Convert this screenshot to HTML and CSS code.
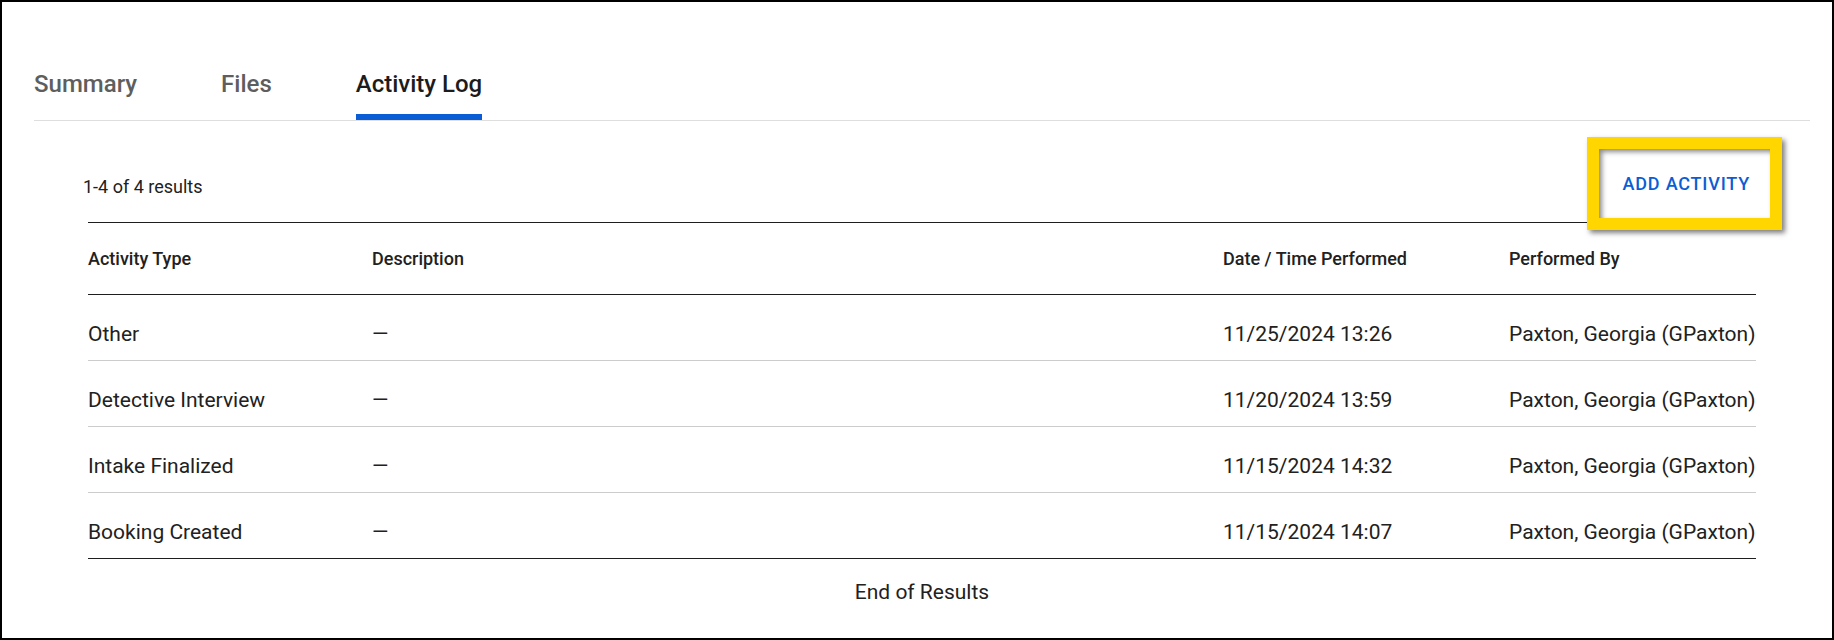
FILE: index.html
```html
<!DOCTYPE html>
<html lang="en">
<head>
<meta charset="utf-8">
<title>Activity Log</title>
<link rel="stylesheet" href="styles.css">
</head>
<body>
<div class="frame">
  <nav class="tabs">
    <div class="tab">Summary</div>
    <div class="tab">Files</div>
    <div class="tab active">Activity Log</div>
  </nav>
  <div class="toolbar">
    <span class="count">1-4 of 4 results</span>
    <button class="add-btn" type="button">Add Activity</button>
  </div>
  <div class="table">
    <div class="row head">
      <div>Activity Type</div>
      <div>Description</div>
      <div>Date / Time Performed</div>
      <div>Performed By</div>
    </div>
    <div class="row">
      <div>Other</div>
      <div>—</div>
      <div>11/25/2024 13:26</div>
      <div>Paxton, Georgia (GPaxton)</div>
    </div>
    <div class="row">
      <div>Detective Interview</div>
      <div>—</div>
      <div>11/20/2024 13:59</div>
      <div>Paxton, Georgia (GPaxton)</div>
    </div>
    <div class="row">
      <div>Intake Finalized</div>
      <div>—</div>
      <div>11/15/2024 14:32</div>
      <div>Paxton, Georgia (GPaxton)</div>
    </div>
    <div class="row">
      <div>Booking Created</div>
      <div>—</div>
      <div>11/15/2024 14:07</div>
      <div>Paxton, Georgia (GPaxton)</div>
    </div>
  </div>
  <div class="end">End of Results</div>
</div>
</body>
</html>
```
FILE: styles.css
```css
* { box-sizing: border-box; }

html, body {
  margin: 0;
  padding: 0;
  background: #000;
}

body {
  font-family: Roboto, "Liberation Sans", Arial, sans-serif;
  color: #212121;
}

.frame {
  width: 1834px;
  height: 640px;
  border: 2px solid #000;
  background: #fff;
  padding: 0 22px 0 32px;
  overflow: hidden;
}

.tabs {
  display: flex;
  gap: 84px;
  padding-top: 68px;
  border-bottom: 1px solid #dedede;
}

.tab {
  font-size: 24px;
  line-height: 28px;
  font-weight: 500;
  color: #5e5e5e;
  padding-bottom: 16px;
  border-bottom: 6px solid transparent;
}

.tab.active {
  color: #1c1c1c;
  border-bottom-color: #0a5dd4;
}

.toolbar {
  display: flex;
  align-items: center;
  justify-content: space-between;
  padding: 28px 40px 5px 49px;
}

.count {
  font-size: 18px;
  line-height: 22px;
  margin-top: 6px;
  color: #212121;
}

.add-btn {
  position: relative;
  height: 69px;
  padding: 0 20px 0 24px;
  border: none;
  background: #fff;
  font-family: Roboto, "Liberation Sans", Arial, sans-serif;
  font-size: 18px;
  font-weight: 500;
  letter-spacing: 0.8px;
  text-transform: uppercase;
  color: #0a5dd4;
}

.add-btn::after {
  content: "";
  position: absolute;
  inset: -12px;
  border: 12px solid #ffd600;
  box-shadow: 3px 3px 5px rgba(0, 0, 0, 0.5), inset 3px 3px 5px rgba(0, 0, 0, 0.45);
  pointer-events: none;
}

.table {
  margin: -1px 54px 0;
  border-top: 1px solid #1e1e1e;
}

.row {
  display: grid;
  grid-template-columns: 284px 851px 286px 1fr;
  padding: 27px 0 14px;
  font-size: 21px;
  line-height: 24px;
  border-bottom: 1px solid #cccccc;
  white-space: nowrap;
}

.row.head {
  padding: 25px 0 24px;
  font-size: 18px;
  line-height: 22px;
  font-weight: 500;
  border-bottom-color: #1e1e1e;
}

.row:last-child {
  border-bottom-color: #1e1e1e;
}

.end {
  text-align: center;
  padding-top: 21px;
  font-size: 21px;
  line-height: 24px;
}
```
